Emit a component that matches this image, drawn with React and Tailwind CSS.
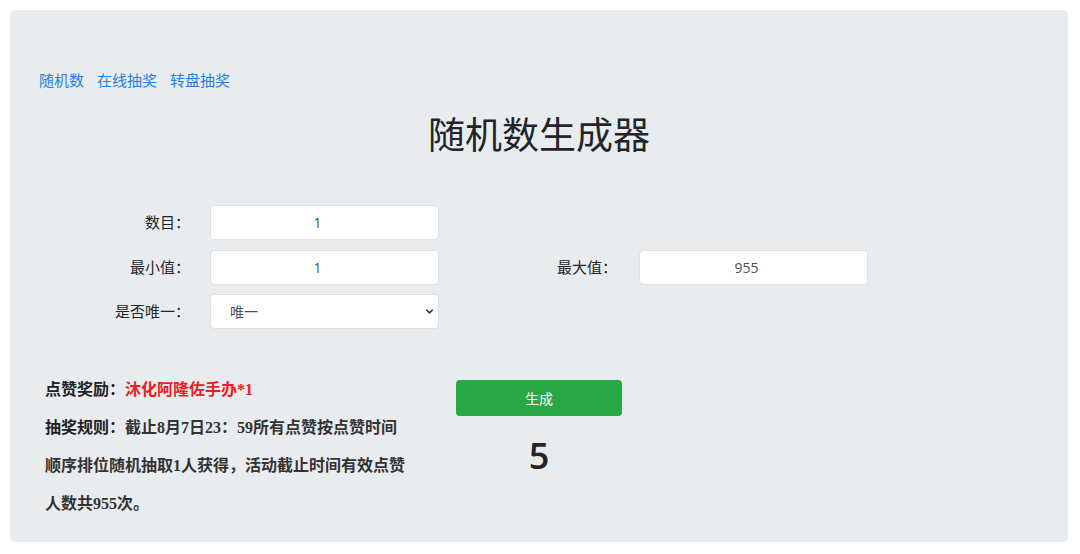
import { ChevronDown } from 'lucide-react'

const sans = { fontFamily: '"Open Sans", "Noto Sans CJK SC", sans-serif' }

function Field({ label, value }) {
  return (
    <div className="flex items-center h-[35px]">
      <label className="w-[160px] text-right text-[15px] text-[#212529]">{label}</label>
      <input
        readOnly
        value={value}
        className="ml-[20px] w-[229px] h-[35px] bg-white border border-[#dde1e5] rounded-[4px] pr-[14px] text-center text-[14px] text-[#495057] outline-none"
      />
    </div>
  )
}

export default function App() {
  return (
    <div
      className="w-[1080px] h-[554px] bg-white pl-[10px] pr-[12px] pt-[10px] pb-[12px]"
      style={sans}
    >
      <div className="h-full bg-[#e9ecef] rounded-[5px] pt-[60px]">
        <nav className="flex gap-[13px] pl-[29px] text-[15px] leading-[21px] text-[#1f80ea]">
          <a href="#">随机数</a>
          <a href="#">在线抽奖</a>
          <a href="#">转盘抽奖</a>
        </nav>

        <h1 className="mt-[22px] text-center text-[37px] leading-[44px] text-[#212529]">
          随机数生成器
        </h1>

        <div className="mt-[48px] pl-[20px] flex flex-col gap-[9.5px]">
          <Field label="数目：" value="1" />
          <div className="flex items-center">
            <Field label="最小值：" value="1" />
            <label className="w-[178px] text-right text-[15px] text-[#212529]">最大值：</label>
            <input
              readOnly
              value="955"
              className="ml-[22px] w-[229px] h-[35px] bg-white border border-[#dde1e5] rounded-[4px] pr-[14px] text-center text-[14px] text-[#495057] outline-none"
            />
          </div>
          <div className="flex items-center h-[35px]">
            <label className="w-[160px] text-right text-[15px] text-[#212529]">是否唯一：</label>
            <div className="relative ml-[20px] w-[229px] h-[35px]">
              <select className="appearance-none w-full h-full bg-white border border-[#dde1e5] rounded-[4px] pl-[19px] text-[14px] text-[#495057] outline-none">
                <option>唯一</option>
                <option>不唯一</option>
              </select>
              <ChevronDown
                size={11}
                strokeWidth={3.2}
                className="absolute right-[4px] top-[12px] text-[#343a40] pointer-events-none"
              />
            </div>
          </div>
        </div>

        <div className="mt-[42px] flex pl-[35px]">
          <div
            className="w-[411px] text-[16px] leading-[38px] text-[#222]"
            style={{ fontFamily: '"Liberation Serif", "Noto Sans CJK SC", serif' }}
          >
            <p>
              <span className="font-bold">点赞奖励：</span>
              <span className="font-bold text-[#ee1c25]">沐化阿隆佐手办*1</span>
            </p>
            <p className="w-[364px]">
              <span className="font-bold">抽奖规则：</span>
              <span className="font-semibold text-[#333]">
                截止8月7日23：59所有点赞按点赞时间顺序排位随机抽取1人获得，活动截止时间有效点赞人数共955次。
              </span>
            </p>
          </div>
          <div className="w-[166px] pt-[9px] flex flex-col items-center">
            <button className="w-[166px] h-[36px] bg-[#28a745] rounded-[4px] text-white text-[14px]">
              生成
            </button>
            <div className="mt-[18px] text-[36px] leading-[43px] font-semibold text-[#212529]">5</div>
          </div>
        </div>
      </div>
    </div>
  )
}
